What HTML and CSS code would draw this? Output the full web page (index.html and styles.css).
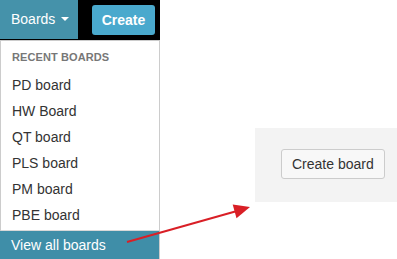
FILE: index.html
```html
<!DOCTYPE html>
<html>
<head>
<meta charset="utf-8">
<link rel="stylesheet" href="styles.css">
</head>
<body>
<div class="page">
  <div class="sidebar">
    <div class="topbar">
      <div class="boards-btn">Boards<span class="caret"></span></div>
      <div class="create-btn">Create</div>
    </div>
    <div class="dropdown">
      <div class="dd-header">RECENT BOARDS</div>
      <div class="dd-item">PD board</div>
      <div class="dd-item">HW Board</div>
      <div class="dd-item">QT board</div>
      <div class="dd-item">PLS board</div>
      <div class="dd-item">PM board</div>
      <div class="dd-item">PBE board</div>
      <div class="dd-divider"></div>
      <div class="dd-viewall">View all boards</div>
    </div>
  </div>
  <div class="panel">
    <div class="create-board">Create board</div>
  </div>
</div>
<svg class="arrow" width="397" height="259" viewBox="0 0 397 259">
  <line x1="127" y1="242" x2="237" y2="211" stroke="#d91f26" stroke-width="2"/>
  <polygon points="250,207 232.7,204.5 236.5,218.3" fill="#d91f26"/>
</svg>
</body>
</html>
```

FILE: styles.css
```css
html, body {
  margin: 0;
  padding: 0;
  background: #ffffff;
  font-family: "Liberation Sans", Arial, sans-serif;
  overflow: hidden;
  width: 397px;
  height: 259px;
}

.page {
  display: flex;
  align-items: flex-start;
}

.sidebar {
  width: 160px;
  flex: none;
}

.topbar {
  display: flex;
  align-items: flex-start;
  background: #000000;
  height: 40px;
}

.boards-btn {
  box-sizing: border-box;
  width: 78px;
  height: 39px;
  padding-left: 11px;
  background: #4592aa;
  color: #ffffff;
  font-size: 14px;
  line-height: 39px;
}

.caret {
  display: inline-block;
  width: 0;
  height: 0;
  margin-left: 6px;
  vertical-align: 3px;
  border-left: 4px solid transparent;
  border-right: 4px solid transparent;
  border-top: 4px solid #ffffff;
}

.create-btn {
  margin-left: 14px;
  margin-top: 5px;
  width: 63px;
  height: 30px;
  border-radius: 3px;
  background: #4aa9cd;
  color: #ffffff;
  font-weight: bold;
  font-size: 14px;
  line-height: 30px;
  text-align: center;
}

.dropdown {
  box-sizing: border-box;
  width: 160px;
  border: 1px solid #cccccc;
  border-bottom: none;
  background: #ffffff;
}

.dd-header {
  padding: 7px 0 5px 11px;
  font-size: 11px;
  line-height: 19px;
  font-weight: bold;
  color: #777777;
  letter-spacing: 0.1px;
}

.dd-item {
  padding-left: 11px;
  height: 26px;
  line-height: 26px;
  font-size: 14px;
  color: #333333;
}

.dd-divider {
  height: 1px;
  margin-top: 2px;
  background: #d8d8d8;
}

.dd-viewall {
  height: 30px;
  padding-left: 11px;
  margin-left: -1px;
  background: #3f8ea8;
  color: #ffffff;
  font-size: 14px;
  line-height: 28px;
}

.panel {
  flex: 1;
  margin-left: 95px;
  margin-top: 128px;
  height: 74px;
  box-sizing: border-box;
  padding: 21px 0 0 26px;
  background: #f3f3f3;
}

.create-board {
  display: inline-block;
  box-sizing: border-box;
  height: 30px;
  padding: 0 10px;
  border: 1px solid #cccccc;
  border-radius: 3px;
  background: #f8f8f8;
  color: #333333;
  font-size: 14px;
  line-height: 28px;
}

.arrow {
  position: absolute;
  left: 0;
  top: 0;
  pointer-events: none;
}
```
